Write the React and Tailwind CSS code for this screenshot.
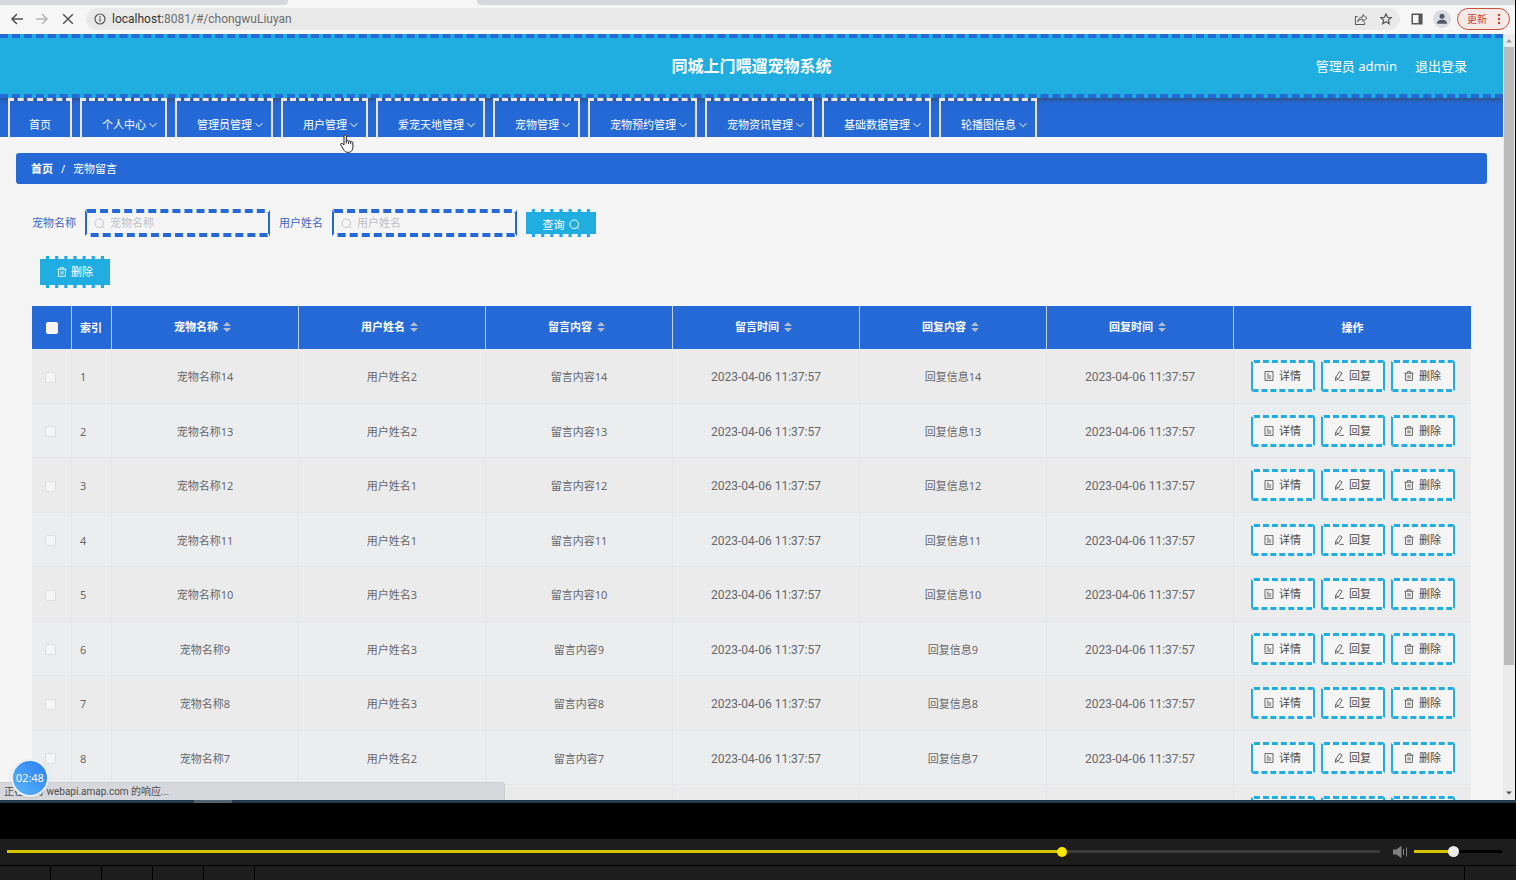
import React from "react";

const menu = ["首页", "个人中心", "管理员管理", "用户管理", "爱宠天地管理", "宠物管理", "宠物预约管理", "宠物资讯管理", "基础数据管理", "轮播图信息"];
const columns = ["宠物名称", "用户姓名", "留言内容", "留言时间", "回复内容", "回复时间"];
const users = [2, 2, 1, 1, 3, 3, 3, 2, 2];
const time = "2023-04-06 11:37:57";
const rows = users.map((user, i) => {
  const n = 14 - i;
  return { index: i + 1, cells: [`宠物名称${n}`, `用户姓名${user}`, `留言内容${n}`, time, `回复信息${n}`, time] };
});

function Icon({ size = "size-[10px]", box = 12, width = 1, children }) {
  return (
    <svg viewBox={`0 0 ${box} ${box}`} className={`${size} shrink-0`} fill="none" stroke="currentColor" strokeWidth={width} aria-hidden="true">
      {children}
    </svg>
  );
}

const SearchIcon = ({ size }) => (
  <Icon size={size}>
    <circle cx="5.7" cy="5.7" r="4.7" />
    <path d="M9 9l2.2 2.2" />
  </Icon>
);
const TrashIcon = () => (
  <Icon width={1}>
    <path d="M.5 2.7h11M4 2.5V.8h4v1.700M1.900 2.900v8.400h8.200V2.900M4.900 5v4M7.100 5v4" />
  </Icon>
);
const TicketIcon = () => (
  <Icon width={1}>
    <path d="M1.200.700h9.600v10.600H1.200zM3.400 3.800h2.400M3.400 6h5.200M3.400 8.400h5.200" />
  </Icon>
);
const EditIcon = () => (
  <Icon width={1}>
    <path d="M6.800.700l2.900 1.700-4.400 7.200-3.700 1.700.400-3.700zM2.200 7.700l2.900 1.800M6.500 11.300h5.300" />
  </Icon>
);
const Chevron = () => (
  <Icon size="size-2" box={8}>
    <path d="M.5 2.2L4 5.7l3.5-3.5" />
  </Icon>
);

function BrowserBar() {
  return (
    <div className="shrink-0 bg-[#f6f6f6]">
      <div className="flex h-[5px]">
        <div className="w-[288px] rounded-br bg-[#d6d8dd]" />
        <div className="w-[189px]" />
        <div className="flex-1 rounded-bl bg-[#d6d8dd]" />
      </div>
      <div className="flex h-[29px] items-center pr-[5px] pb-[2px] pl-[10px] text-[#555]">
        <button aria-label="后退" className="mr-[11px]">
          <Icon size="size-[14px]" box={14} width={1.6}><path d="M13 7H2M7 2L2 7l5 5" /></Icon>
        </button>
        <button aria-label="前进" className="mr-[12px] text-[#b5b5b5]">
          <Icon size="size-[14px]" box={14} width={1.5}><path d="M1 7h11M7 2l5 5-5 5" /></Icon>
        </button>
        <button aria-label="停止" className="mr-[11px]">
          <Icon size="size-[14px]" box={14} width={1.5}><path d="M2.2 2.2l9.6 9.6M11.8 2.2l-9.6 9.6" /></Icon>
        </button>
        <div className="flex h-[22px] flex-1 items-center gap-[6px] rounded-full bg-[#e9e9e9] px-[8px]">
          <Icon size="size-[12px]" width={1.2}>
            <circle cx="6" cy="6" r="5" />
            <path d="M6 5.2v3.6M6 3.1v1.3" />
          </Icon>
          <div className="flex-1 font-[Roboto,sans-serif] text-[12px] text-[#6c6c6c]"><span className="text-[#333]">localhost:</span>8081/#/chongwuLiuyan</div>
          <button aria-label="分享" className="mr-[6px]">
            <Icon size="size-[14px]" box={14} width={1}>
              <path d="M3.6 4.5H1.4v8h9.2v-2.2M3.7 9.8c.3-3 1.9-4.7 5.2-4.8V2.6L13 6.2 8.9 9.6V7.2c-2.300-.1-4 .7-5.200 2.600z" />
            </Icon>
          </button>
          <button aria-label="收藏">
            <Icon size="size-[12px]" width={1.2}><path d="M6 .9l1.500 3.400 3.700.3-2.800 2.400.9 3.700L6 8.800l-3.300 1.900.9-3.700L.8 4.600l3.700-.3z" /></Icon>
          </button>
        </div>
        <button aria-label="侧边栏" className="mr-[10px] ml-[11px]">
          <Icon size="size-[12px]" width={1.500}>
            <path d="M1.200 1.200h9.600v9.600H1.200z" />
            <path d="M7.500 1h3.300v10H7.500z" fill="currentColor" stroke="none" />
          </Icon>
        </button>
        <button aria-label="用户" className="mr-[6px] flex size-[18px] items-center justify-center rounded-full bg-[#d9dce1] text-[#4f5a69]">
          <svg viewBox="0 0 12 12" className="size-[12px]" fill="currentColor" aria-hidden="true">
            <circle cx="6" cy="3.300" r="2.500" />
            <path d="M1 10.800c0-2.900 2.200-4 5-4s5 1.100 5 4z" />
          </svg>
        </button>
        <button className="flex h-[22px] w-[53px] items-center justify-between rounded-full border border-[#c5533f] bg-[#f7e9e6] pr-[8px] pl-[9px] text-[10px] text-[#c5432f]">
          更新
          <svg viewBox="0 0 4 12" className="h-3 w-1" fill="currentColor" aria-hidden="true">
            <circle cx="2" cy="2" r="1.200" /><circle cx="2" cy="6" r="1.200" /><circle cx="2" cy="10" r="1.200" />
          </svg>
        </button>
      </div>
    </div>
  );
}

function SearchField({ id, label }) {
  return (
    <div className="flex items-center gap-[9px]">
      <label htmlFor={id} className="text-[#3c68be]">{label}</label>
      <div className="flex h-[28px] w-[185px] items-center gap-[5px] rounded-[3px] border-x-2 border-y-4 border-[#2569d6] pl-[7px] text-[#bdc0c7] [border-style:dashed_solid]">
        <SearchIcon size="size-[11px]" />
        <input id={id} placeholder={label} className="w-full min-w-0 bg-transparent outline-none placeholder:text-[#bdc0c7]" />
      </div>
    </div>
  );
}

function ActionButton({ icon, label }) {
  return (
    <button className="flex h-[32px] w-[64px] items-center justify-center gap-[5px] rounded-[3px] border-x-2 border-y-[3px] border-[#22ade0] bg-[#f5f5f5] text-[#4a4a4a] [border-style:dashed_solid]">
      {icon}
      {label}
    </button>
  );
}

function MessageTable() {
  return (
    <table className="w-full table-fixed border-separate border-spacing-0">
      <colgroup>
        <col className="w-[40px]" />
        <col className="w-[40px]" />
        {columns.map((c) => <col key={c} />)}
        <col className="w-[237px]" />
      </colgroup>
      <thead>
        <tr className="h-[43px] bg-[#2569d6] text-white">
          <th className="border-r border-[#c3d1ec] p-0">
            <input type="checkbox" aria-label="全选" className="ml-[14px] block size-[12px] appearance-none rounded-[2px] bg-[#f6f6f6]" />
          </th>
          <th className="border-r border-[#c3d1ec] p-0 pl-[8px] text-left">索引</th>
          {columns.map((c) => (
            <th key={c} className="border-r border-[#c3d1ec] p-0 pr-[5px] pb-[2px]">
              <button className="mx-auto flex items-center gap-[5px] font-bold">
                {c}
                <svg viewBox="0 0 8 10" className="h-[10px] w-[8px]" fill="#b5bccb" aria-hidden="true">
                  <path d="M4 0l4 4H0zM4 10L0 6h8z" />
                </svg>
              </button>
            </th>
          ))}
          <th className="p-0">操作</th>
        </tr>
      </thead>
      <tbody className="text-[#66686c]">
        {rows.map((row) => (
          <tr key={row.index} className="odd:h-[55px] odd:bg-[#ebebeb] even:h-[54px] even:bg-[#ecedef]">
            <td className="border-r border-b border-[#e4e6eb] p-0 pt-[2px]">
              <input type="checkbox" aria-label={`选择第${row.index}行`} className="ml-[13px] block size-[11px] appearance-none rounded-[2px] border border-[#dcdee3] bg-[#f5f5f5]" />
            </td>
            <td className="border-r border-b border-[#e4e6eb] p-0 pt-[2px] pl-[8px]">{row.index}</td>
            {row.cells.map((cell, i) => (
              <td key={i} className={`border-r border-b border-[#e4e6eb] p-0 pt-[2px] text-center ${cell === time ? "font-[Roboto,sans-serif] text-[12px]" : ""}`}>{cell}</td>
            ))}
            <td className="border-b border-[#e4e6eb] p-0">
              <div className="flex justify-center gap-[6px]">
                <ActionButton icon={<TicketIcon />} label="详情" />
                <ActionButton icon={<EditIcon />} label="回复" />
                <ActionButton icon={<TrashIcon />} label="删除" />
              </div>
            </td>
          </tr>
        ))}
      </tbody>
    </table>
  );
}

function Page() {
  return (
    <div className="min-w-0 flex-1 overflow-x-hidden overflow-y-auto bg-[#f5f5f5] [scrollbar-width:none]">
      <header className="relative grid h-[64px] grid-cols-3 items-center border-y-4 border-dashed border-[#2569d6] bg-[#20ade0] text-white shadow-[0_1px_5px_rgba(60,60,60,0.8)]">
        <h1 className="col-start-2 text-center text-[16px] font-bold">同城上门喂遛宠物系统</h1>
        <div className="flex justify-end gap-[18px] pr-[36px] text-[13px]">
          <span>管理员 admin</span>
          <a href="#logout">退出登录</a>
        </div>
      </header>
      <nav className="flex h-[39px] gap-2 bg-[#2569d6] pl-[8px] text-white">
        {menu.map((item, i) => (
          <a key={item} href="#menu" className="relative flex items-center gap-[3px] border-x-2 border-t-[3px] border-[#ece5dd] pt-[12px] pr-[8px] pl-[20px] whitespace-nowrap [border-style:dashed_solid] first:px-[19px]">
            {item}
            {i > 0 && <Chevron />}
          </a>
        ))}
      </nav>
      <div className="mx-[16px] mt-[16px] flex h-[31px] items-center gap-[8px] rounded-[3px] bg-[#2569d6] pl-[15px] text-white">
        <a href="#home" className="font-bold">首页</a>
        <span>/</span>
        <span>宠物留言</span>
      </div>
      <main className="mx-[32px] mt-[25px]">
        <form className="flex items-center gap-[9px]">
          <SearchField id="pet-name" label="宠物名称" />
          <SearchField id="user-name" label="用户姓名" />
          <button type="button" className="flex h-[28px] w-[70px] items-center justify-center gap-[4px] border-y-[3px] border-dashed border-[#f5f5f5] bg-[#20ade0] pt-[3px] text-white">
            查询
            <SearchIcon size="size-[11px]" />
          </button>
        </form>
        <button className="mt-[19px] mb-[18px] ml-[8px] flex h-[32px] w-[70px] items-center justify-center gap-[4px] border-y-[3px] border-dashed border-[#f5f5f5] bg-[#20ade0] text-white">
          <TrashIcon />
          删除
        </button>
        <MessageTable />
      </main>
    </div>
  );
}

function Scrollbar() {
  return (
    <div className="flex w-[12px] shrink-0 flex-col items-center bg-[#ececec]" aria-hidden="true">
      <svg viewBox="0 0 12 13" className="h-[13px] w-full" fill="#999"><path d="M6 5l3 3.500H3z" /></svg>
      <div className="w-[10px] flex-[618] bg-[#bbb]" />
      <div className="flex-[122]" />
      <svg viewBox="0 0 12 13" className="h-[13px] w-full" fill="#555"><path d="M3 4.500h6L6 7.500z" /></svg>
    </div>
  );
}

function Player() {
  return (
    <div className="shrink-0 bg-black">
      <div className="h-[3px] bg-[#26394c]">
        <div className="ml-[194px] h-full w-[38px] bg-[#536571]" />
      </div>
      <div className="h-[36px]" />
      <div className="flex h-[26px] items-center bg-[#1d1d1d] pr-[14px] pb-px pl-[7px]">
        <input
          type="range" aria-label="播放进度" min="0" max="1000" defaultValue="770"
          className="h-[3px] min-w-0 flex-1 appearance-none rounded-none bg-[linear-gradient(to_right,#d6c500_77%,#3b3b3b_77%)] [&::-webkit-slider-thumb]:size-[10px] [&::-webkit-slider-thumb]:appearance-none [&::-webkit-slider-thumb]:rounded-full [&::-webkit-slider-thumb]:bg-[#ffe600]"
        />
        <button aria-label="音量" className="mr-[6px] ml-[12px] text-[#808080]">
          <svg viewBox="0 0 16 14" className="h-[14px] w-[16px]" aria-hidden="true">
            <path d="M1 4.500h3.500L9.500.8v12.400L4.500 9.500H1z" fill="currentColor" />
            <path d="M11.500 4v6M14.500 2.500v9" stroke="currentColor" />
          </svg>
        </button>
        <input
          type="range" aria-label="音量大小" min="0" max="100" defaultValue="44"
          className="h-[3px] w-[88px] appearance-none rounded-none bg-[linear-gradient(to_right,#d6c500_44%,#000_44%)] [&::-webkit-slider-thumb]:size-[11px] [&::-webkit-slider-thumb]:appearance-none [&::-webkit-slider-thumb]:rounded-full [&::-webkit-slider-thumb]:bg-[#ececec]"
        />
      </div>
      <div className="mt-px flex h-[14px] gap-px">
        {[0, 1, 2, 3, 4].map((n) => <div key={n} className="w-[50px] bg-[#1d1d1d]" />)}
        <div className="flex-1 bg-[#1d1d1d]" />
        <div className="w-[51px] bg-[#1d1d1d]" />
      </div>
    </div>
  );
}

export default function App() {
  return (
    <div className="flex h-screen flex-col overflow-hidden bg-black font-['Noto_Sans','Noto_Sans_CJK_SC',sans-serif] text-[11px] leading-[16px]">
      <div className="relative mr-px flex min-h-0 flex-1 flex-col overflow-hidden">
        <BrowserBar />
        <div className="flex min-h-0 flex-1">
          <Page />
          <Scrollbar />
        </div>
        <div className="absolute bottom-0 left-0 flex h-[18px] w-[505px] items-center rounded-tr-[3px] border-t border-r border-[#cccdd1] bg-[#d7d8dc] pl-[4px] font-[Roboto,'Noto_Sans_CJK_SC',sans-serif] text-[10px] text-[#4c4c4c]">
          正在等待 webapi.amap.com 的响应...
        </div>
        <div className="absolute bottom-[3px] left-[11px] flex size-[38px] items-center justify-center rounded-full border-2 border-[#eef2f7] bg-[linear-gradient(to_top_right,#58b8f8,#2f7cf6)] text-[11px] text-white shadow">
          02:48
        </div>
        <svg viewBox="0 0 14 19" className="absolute top-[134px] left-[340px] h-[19px] w-[14px]" fill="#fff" stroke="#222" strokeLinejoin="round" aria-hidden="true">
          <path d="M4 11V2c0-1.700 2.300-1.700 2.300 0v5c.3-.9 2-.8 2.200.3.500-.8 2-.6 2.200.5.800-.6 2.200-.2 2.200 1.100v4.300c0 3-1.600 5.200-4.700 5.200-2.600 0-3.700-1.200-4.800-3.200L.8 11c-.7-1.400 1-2.200 1.900-1.200zM6.300 7v2.500M8.500 7.500v2.300M10.700 8v2" />
        </svg>
      </div>
      <Player />
    </div>
  );
}
